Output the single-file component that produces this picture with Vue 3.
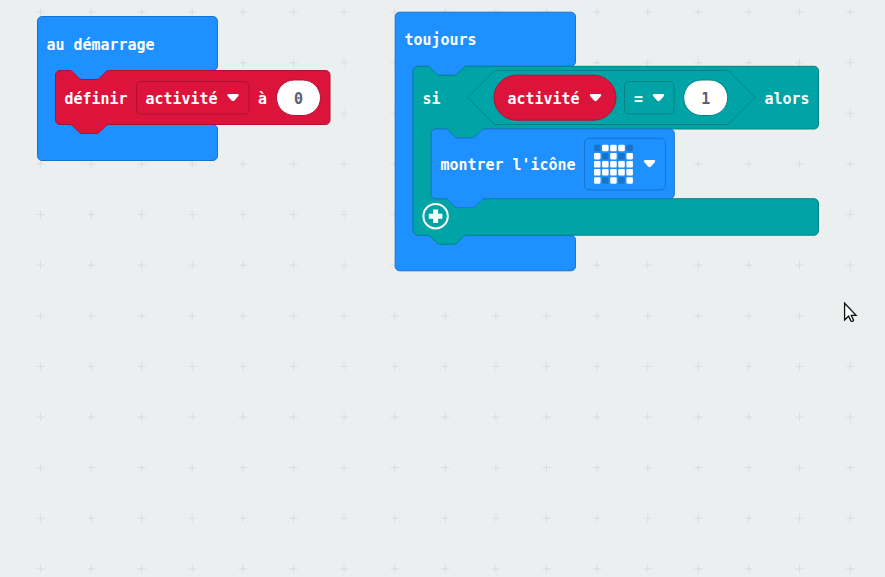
<script setup>
const notchIn = 'c2.25 0 3.4 1.1 4.5 2.25l4.5 4.5c1.1 1.1 2.25 2.25 4.5 2.25h13.5c2.25 0 3.4-1.1 4.5-2.25l4.5-4.5c1.1-1.1 2.25-2.25 4.5-2.25'
const notchOut = 'c-2.25 0-3.4 1.1-4.5 2.25l-4.5 4.5c-1.1 1.1-2.25 2.25-4.5 2.25h-13.5c-2.25 0-3.4-1.1-4.5-2.25l-4.5-4.5c-1.1-1.1-2.25-2.25-4.5-2.25'

// Plain statement block with a notch on top and a tab below
const statement = (x, y, r, b) =>
  `M${x} ${y + 4.5}a4.5 4.5 0 0 1 4.5-4.5h9${notchIn}H${r - 4.5}a4.5 4.5 0 0 1 4.5 4.5V${b - 4.5}a4.5 4.5 0 0 1-4.5 4.5H${x + 54}${notchOut}h-9a4.5 4.5 0 0 1-4.5-4.5z`

// Wrapping block: body from y to b, open between m1 and m2
const wrapper = (x, y, r, b, m1, m2, notched) =>
  `M${x} ${y + 4.5}a4.5 4.5 0 0 1 4.5-4.5${notched ? 'h9' + notchIn : ''}H${r - 4.5}a4.5 4.5 0 0 1 4.5 4.5V${m1 - 4.5}a4.5 4.5 0 0 1-4.5 4.5H${x + 72}${notchOut}h-9a4.5 4.5 0 0 0-4.5 4.5V${m2 - 4.5}a4.5 4.5 0 0 0 4.5 4.5H${r - 4.5}a4.5 4.5 0 0 1 4.5 4.5V${b - 4.5}a4.5 4.5 0 0 1-4.5 4.5${notched ? `H${x + 54}${notchOut}h-9` : `H${x + 4.5}`}a4.5 4.5 0 0 1-4.5-4.5z`

const rows = ['01110', '10101', '11111', '11111', '10101']
const leds = rows.flatMap((row, j) =>
  [...row].map((v, i) => ({ id: `${i}-${j}`, x: 594 + i * 8.1, y: 144.8 + j * 8.1, on: v === '1' }))
)
const arrows = [[233, 97.5], [595.5, 97.5], [658.5, 97.5], [649.5, 163.5]]
const labels = [
  ['au démarrage', 46.5, 50, 108], ['définir', 64.5, 104, 63], ['activité', 145.5, 104, 72], ['à', 258, 104, 9],
  ['toujours', 404.5, 45, 72], ['si', 422.5, 104, 18], ['activité', 507.5, 104, 72], ['=', 634, 104, 9],
  ['alors', 764.5, 104, 45], ['montrer l\'icône', 440.5, 170, 135]
]
</script>

<template>
  <svg class="workspace" width="885" height="577" viewBox="0 0 885 577">
    <defs>
      <pattern id="grid" x="15.1" y="-13.2" width="50.61" height="50.61" patternUnits="userSpaceOnUse">
        <path class="cross" d="M21.3 25.3h8M25.3 21.3v8" />
      </pattern>
    </defs>
    <rect width="885" height="577" fill="url(#grid)" />

    <path class="blue" :d="wrapper(37.5, 16.5, 217.5, 160.5, 70.5, 124.5, false)" />
    <path class="red" :d="statement(55.5, 70.5, 330, 124.5)" />
    <rect class="field red-line" x="136.5" y="81.5" width="112.5" height="32.5" rx="4.5" />
    <rect class="value on-red" x="276.5" y="80" width="44" height="35.5" rx="17.75" />

    <path class="blue" :d="wrapper(395.2, 12.2, 575.5, 270.8, 66.3, 235.3, false)" />
    <path class="teal" :d="wrapper(413.2, 66.3, 818.5, 235.2, 129, 198.7, true)" />
    <path class="teal" d="M494.5 70.5H728L755 97.5L728 124.5H494.5L467.5 97.5z" />
    <rect class="red" x="494" y="75.2" width="122" height="45" rx="22.5" />
    <rect class="field teal-line" x="624.5" y="81.5" width="49.5" height="32.5" rx="4.5" />
    <rect class="value on-teal" x="683.7" y="80" width="44" height="35.5" rx="17.75" />
    <path class="blue" :d="statement(431.2, 129, 674.3, 198.7)" />
    <rect class="field blue-line" x="584.5" y="138.3" width="81" height="51.6" rx="4.5" />
    <rect v-for="l in leds" :key="l.id" :class="l.on ? 'lit' : 'unlit'" :x="l.x" :y="l.y" width="6.5" height="6.5" rx="1.1" />

    <circle class="ring" cx="435.6" cy="216.2" r="12.2" />
    <path class="plus" d="M428.8 216.2h13.6M435.6 209.4v13.6" />

    <path v-for="[x, y] in arrows" :key="`${x}-${y}`" class="arrow" :d="`M${x - 4.6} ${y - 2.3}h9.2l-4 4.5q-.6.6-1.2 0z`" />
    <text v-for="[t, x, y, w] in labels" :key="`${t}-${x}`" class="label" :x="x" :y="y" :textLength="w" lengthAdjust="spacingAndGlyphs">{{ t }}</text>
    <text class="label number" x="294" y="104" textLength="9" lengthAdjust="spacingAndGlyphs">0</text>
    <text class="label number" x="701.3" y="104" textLength="9" lengthAdjust="spacingAndGlyphs">1</text>

    <path class="cursor" d="M844.6 303.2V320l4-3.8 2.6 5.2q1.8.3 2.4-1.2l-2.3-4.8h4.8z" />
  </svg>
</template>

<style>
body { background: #ecf0f1; overflow: hidden; }
</style>

<style scoped>
.workspace { display: block; background: #ebeff0; }
.cross { stroke: #d9dddd; stroke-width: 1; }
.blue { fill: #1e90ff; stroke: #1873cc; }
.red { fill: #dc143c; stroke: #b01030; }
.teal { fill: #00a4a6; stroke: #008385; }
.field { fill: none; }
.red-line { stroke: #b01030; }
.teal-line { stroke: #008385; }
.blue-line { stroke: #1873cc; }
.value { fill: #fff; }
.on-red { stroke: #b01030; }
.on-teal { stroke: #008385; }
.lit { fill: #fff; }
.unlit { fill: #1873cc; }
.ring { fill: none; stroke: #fff; stroke-width: 2; }
.plus { stroke: #fff; stroke-width: 5; }
.arrow { fill: #fff; stroke: #fff; stroke-width: 2.2; stroke-linejoin: round; }
.label { font: bold 16.5px "DejaVu Sans Mono", monospace; fill: #fff; white-space: pre; }
.number { fill: #575e75; }
.cursor { fill: #fff; stroke: #111; stroke-width: 1.3; stroke-linejoin: miter; }
</style>
